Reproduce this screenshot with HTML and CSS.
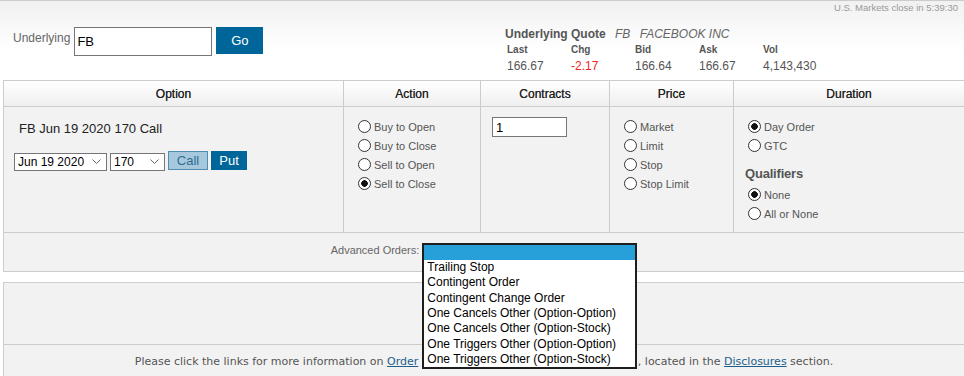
FILE: index.html
```html
<!DOCTYPE html>
<html lang="en">
<head>
    <meta charset="UTF-8">
    <meta name="viewport" content="width=device-width, initial-scale=1.0">
    <title>Option Order Entry</title>
    <link rel="stylesheet" href="styles.css">
</head>
<body>
    <div class="topbar">
        <div class="market-clock">U.S. Markets close in 5:39:30</div>
        <div class="quote-row">
            <form class="underlying">
                <label for="symbol">Underlying</label>
                <input type="text" id="symbol" class="symbol-input" value="FB">
                <button type="button" class="btn-go">Go</button>
            </form>
            <div class="quote">
                <div class="quote-title">Underlying Quote <span class="quote-name">FB</span> <span class="quote-name">FACEBOOK INC</span></div>
                <div class="quote-grid">
                    <span class="quote-label">Last</span>
                    <span class="quote-label">Chg</span>
                    <span class="quote-label">Bid</span>
                    <span class="quote-label">Ask</span>
                    <span class="quote-label">Vol</span>
                    <span class="quote-value">166.67</span>
                    <span class="quote-value down">-2.17</span>
                    <span class="quote-value">166.64</span>
                    <span class="quote-value">166.67</span>
                    <span class="quote-value">4,143,430</span>
                </div>
            </div>
        </div>
    </div>

    <div class="order-panel">
        <div class="order-grid">
            <div class="head">Option</div>
            <div class="head">Action</div>
            <div class="head">Contracts</div>
            <div class="head">Price</div>
            <div class="head">Duration</div>

            <div class="cell option-cell">
                <div class="option-name">FB Jun 19 2020 170 Call</div>
                <div class="option-pick">
                    <span class="select-wrap expiry">
                        <select><option>Jun 19 2020</option></select>
                        <svg class="chevron" width="9" height="5" viewBox="0 0 9 5"><path d="M0.5 0.5 L4.5 4.5 L8.5 0.5" fill="none" stroke="#666" stroke-width="1"/></svg>
                    </span>
                    <span class="select-wrap strike">
                        <select><option>170</option></select>
                        <svg class="chevron" width="9" height="5" viewBox="0 0 9 5"><path d="M0.5 0.5 L4.5 4.5 L8.5 0.5" fill="none" stroke="#666" stroke-width="1"/></svg>
                    </span>
                    <button type="button" class="btn-call">Call</button>
                    <button type="button" class="btn-put">Put</button>
                </div>
            </div>

            <div class="cell radio-cell">
                <label class="radio"><input type="radio" name="action">Buy to Open</label>
                <label class="radio"><input type="radio" name="action">Buy to Close</label>
                <label class="radio"><input type="radio" name="action">Sell to Open</label>
                <label class="radio"><input type="radio" name="action" checked>Sell to Close</label>
            </div>

            <div class="cell contracts-cell">
                <input type="text" class="contracts-input" value="1">
            </div>

            <div class="cell radio-cell">
                <label class="radio"><input type="radio" name="price">Market</label>
                <label class="radio"><input type="radio" name="price">Limit</label>
                <label class="radio"><input type="radio" name="price">Stop</label>
                <label class="radio"><input type="radio" name="price">Stop Limit</label>
            </div>

            <div class="cell radio-cell duration-cell">
                <label class="radio"><input type="radio" name="duration" checked>Day Order</label>
                <label class="radio"><input type="radio" name="duration">GTC</label>
                <div class="qualifiers">Qualifiers</div>
                <label class="radio"><input type="radio" name="qualifier" checked>None</label>
                <label class="radio"><input type="radio" name="qualifier">All or None</label>
            </div>
        </div>

        <div class="advanced-row">
            <span class="advanced-label">Advanced Orders:</span>
            <div class="advanced-select">
                <ul class="dropdown">
                    <li class="selected">&nbsp;</li>
                    <li>Trailing Stop</li>
                    <li>Contingent Order</li>
                    <li>Contingent Change Order</li>
                    <li>One Cancels Other (Option-Option)</li>
                    <li>One Cancels Other (Option-Stock)</li>
                    <li>One Triggers Other (Option-Option)</li>
                    <li>One Triggers Other (Option-Stock)</li>
                </ul>
            </div>
        </div>
    </div>

    <div class="info-panel">
        <div class="info-top"></div>
        <p class="info-text">Please click the links for more information on <a href="#">Order</a><span class="covered"> <a href="#">Types</a> and <a href="#">Advanced Orders Definitions</a></span>, located in the <a href="#">Disclosures</a> section.</p>
    </div>
</body>
</html>
```

FILE: styles.css
```css
body {
    margin: 0;
    font-family: "Liberation Sans", Arial, sans-serif;
    color: #555;
    background-color: #fff;
    overflow: hidden;
}
.topbar {
    height: 79px;
    border-top: 1px solid #ccc;
    background: linear-gradient(#f1f1f1, #fff 50px);
}
.market-clock {
    padding: 1px 6px 0 0;
    font-size: 9.5px;
    line-height: 11px;
    color: #999;
    text-align: right;
}
.quote-row {
    display: flex;
    margin-top: 14px;
}
.underlying {
    box-sizing: border-box;
    width: 505px;
    padding-left: 13px;
    margin: 0;
    display: flex;
    align-items: flex-start;
}
.underlying label {
    padding-top: 4px;
    font-size: 12px;
    line-height: 14px;
    color: #666;
}
.symbol-input {
    box-sizing: border-box;
    width: 138px;
    height: 29px;
    margin-left: 4px;
    padding: 0 2px;
    border: 1px solid #767676;
    font-family: "Liberation Sans", Arial, sans-serif;
    font-size: 13px;
    color: #000;
    outline: none;
}
.btn-go {
    width: 47px;
    height: 27px;
    margin-left: 4px;
    border: none;
    background-color: #006699;
    color: #fff;
    font-family: "Liberation Sans", Arial, sans-serif;
    font-size: 13px;
    cursor: pointer;
}
.quote-title {
    font-size: 12px;
    line-height: 14px;
    font-weight: bold;
    color: #555;
}
.quote-name {
    margin-left: 6px;
    font-weight: normal;
    font-style: italic;
    color: #666;
}
.quote-grid {
    display: grid;
    grid-template-columns: repeat(5, 64px);
    padding-left: 2px;
    margin-top: 3px;
}
.quote-label {
    font-size: 10px;
    line-height: 12px;
    font-weight: bold;
    color: #555;
    margin-bottom: 3px;
}
.quote-value {
    font-size: 12px;
    line-height: 14px;
    color: #555;
}
.quote-value.down {
    color: #f01e1e;
}

/* order entry table */
.order-panel {
    box-sizing: border-box;
    width: 962px;
    margin-left: 3px;
    border: 1px solid #ccc;
    background-color: #f2f2f2;
}
.order-grid {
    display: grid;
    grid-template-columns: 339px 137px 129px 124px 1fr;
}
.head {
    box-sizing: border-box;
    height: 26px;
    line-height: 26px;
    border-bottom: 1px solid #ccc;
    background: linear-gradient(#fff, #efefef);
    text-align: center;
    font-size: 12px;
    color: #222;
    text-shadow: 0 0 0.6px #444;
}
.cell {
    box-sizing: border-box;
    height: 126px;
    border-bottom: 1px solid #ccc;
}
.head + .head,
.cell + .cell {
    border-left: 1px solid #ccc;
}
.option-cell {
    padding: 14px 0 0 10px;
}
.option-name {
    margin-left: 5px;
    font-size: 13px;
    line-height: 15px;
    color: #222;
}
.option-pick {
    display: flex;
    align-items: center;
    gap: 3px;
    margin-top: 15px;
}
.select-wrap {
    position: relative;
    display: block;
    height: 18px;
}
.select-wrap select {
    box-sizing: border-box;
    width: 100%;
    height: 18px;
    padding: 0 0 0 3px;
    border: 1px solid #767676;
    border-radius: 0;
    background-color: #fff;
    appearance: none;
    font-family: "Liberation Sans", Arial, sans-serif;
    font-size: 12px;
    color: #000;
}
.expiry {
    width: 93px;
}
.strike {
    width: 55px;
}
.chevron {
    position: absolute;
    right: 6px;
    top: 7px;
    pointer-events: none;
}
.btn-call,
.btn-put {
    box-sizing: border-box;
    height: 19px;
    padding: 0;
    font-family: "Liberation Sans", Arial, sans-serif;
    font-size: 13px;
    cursor: pointer;
}
.btn-call {
    width: 40px;
    border: 1px solid #4f8db3;
    background-color: #a7c8dc;
    color: #2a6d96;
}
.btn-put {
    width: 36px;
    border: 1px solid #006699;
    background-color: #006699;
    color: #fff;
}
.radio-cell {
    padding: 10px 0 0 14px;
}
.radio {
    display: flex;
    align-items: center;
    height: 19px;
    font-size: 11px;
    color: #555;
}
.radio input {
    box-sizing: border-box;
    width: 13px;
    height: 13px;
    margin: 0 3px 0 0;
    border: 1px solid #333;
    border-radius: 50%;
    background-color: #fff;
    appearance: none;
}
.radio input:checked {
    background: radial-gradient(circle, #111 0 3px, #fff 3.6px);
}
.contracts-cell {
    padding: 10px 0 0 11px;
}
.contracts-input {
    box-sizing: border-box;
    width: 75px;
    height: 20px;
    padding: 0 3px;
    border: 1px solid #767676;
    font-family: "Liberation Sans", Arial, sans-serif;
    font-size: 13px;
    color: #000;
    outline: none;
}
.duration-cell {
    padding-left: 11px;
}
.duration-cell .radio {
    padding-left: 3px;
}
.qualifiers {
    margin: 11px 0 3px;
    font-size: 13px;
    line-height: 16px;
    font-weight: bold;
    letter-spacing: -0.2px;
    color: #555;
}

/* advanced orders */
.advanced-row {
    height: 38px;
    display: flex;
    align-items: center;
    justify-content: center;
    gap: 3px;
}
.advanced-label {
    margin-bottom: 3px;
    font-size: 11px;
    line-height: 13px;
    color: #666;
}
.advanced-select {
    position: relative;
    width: 215px;
    height: 18px;
}
.dropdown {
    position: absolute;
    left: 0;
    top: 0;
    z-index: 2;
    box-sizing: border-box;
    width: 215px;
    margin: 0;
    padding: 0;
    list-style: none;
    border: 2px solid #1e1e1e;
    background-color: #fff;
}
.dropdown li {
    height: 15.33px;
    padding-left: 3px;
    font-size: 12px;
    line-height: 15px;
    color: #000;
    white-space: nowrap;
}
.dropdown li.selected {
    height: 15px;
    background-color: #27a0da;
}

/* info box */
.info-panel {
    box-sizing: border-box;
    width: 962px;
    margin: 10px 0 0 3px;
    border: 1px solid #ccc;
    border-bottom: none;
    background-color: #f2f2f2;
}
.info-top {
    height: 61px;
    border-bottom: 1px solid #ccc;
}
.info-text {
    margin: 0;
    padding: 10px 0 20px;
    font-family: "DejaVu Sans", Verdana, sans-serif;
    font-size: 11px;
    line-height: 14px;
    color: #555;
    text-align: center;
}
.info-text a {
    color: #1b5e8c;
}
.covered {
    visibility: hidden;
}
```
